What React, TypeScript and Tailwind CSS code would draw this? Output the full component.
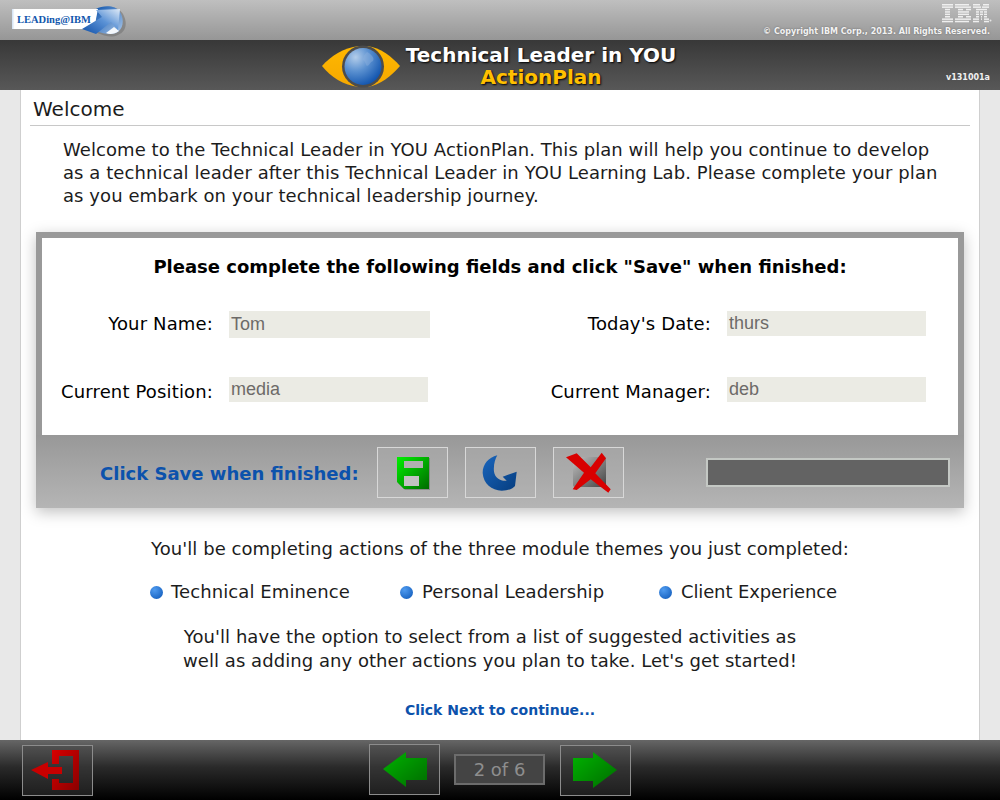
import React from "react";

const font = "[font-family:'DejaVu_Sans',Verdana,sans-serif]";

function LeadingLogo() {
  return (
    <div className="relative ml-[12px] mt-[5px] h-[32px] w-[114px]">
      <svg width="114" height="32" viewBox="0 0 114 32" className="absolute inset-0">
        <defs>
          <linearGradient id="lg1" x1="0" y1="1" x2="1" y2="0">
            <stop offset="0" stopColor="#0f4fa8" />
            <stop offset="0.55" stopColor="#5c93d6" />
            <stop offset="1" stopColor="#dfeaf7" />
          </linearGradient>
          <linearGradient id="lg2" x1="0" y1="0" x2="1" y2="1">
            <stop offset="0" stopColor="#1257ae" />
            <stop offset="1" stopColor="#a9c6e8" />
          </linearGradient>
          <linearGradient id="lg3" x1="0" y1="0" x2="1" y2="0">
            <stop offset="0" stopColor="#cfe0f4" />
            <stop offset="0.03" stopColor="#ffffff" />
            <stop offset="1" stopColor="#ffffff" />
          </linearGradient>
        </defs>
        <path d="M84 4 C92 -1 106 0 110 8 C115 17 113 26 105 29 C98 32 92 30 84 27 Z" fill="#6f6f6f" opacity="0.55" transform="translate(1 1)" />
        <path d="M84 4 C91 0 104 0 108 7 C113 15 111 25 104 28 C98 30 92 29 84 26 Z" fill="url(#lg2)" />
        <path d="M94 28 L102 22 L107 26 C103 29 98 30 94 28 Z" fill="#f4f8fc" />
        <path d="M0 4 H86 L82 24 H0 Z" fill="url(#lg3)" />
        <path d="M84 5 L108 4 L106 25 L99 17 L84 29 L70 24 L90 12 Z" fill="url(#lg1)" />
      </svg>
      <span className="absolute left-[5px] top-[8px] text-[10.500px] font-bold leading-[14px] text-[#1257ad] [font-family:'Liberation_Serif',serif]">
        LEADing@IBM
      </span>
    </div>
  );
}

const ibmRows: number[][][] = [
  [[0, 11], [13, 27], [31, 38], [41, 47]],
  [[0, 11], [13, 29], [31, 39], [40, 47]],
  [[3, 8], [16, 21], [24, 29], [34, 45]],
  [[3, 8], [16, 27], [34, 37], [38, 41], [42, 45]],
  [[3, 8], [16, 27], [34, 37], [38, 41], [42, 45]],
  [[3, 8], [16, 21], [24, 29], [34, 37], [39, 40], [42, 45]],
  [[0, 11], [13, 29], [31, 37], [39, 40], [42, 47]],
  [[0, 11], [13, 27], [31, 37], [42, 47]],
];

function IbmLogo() {
  return (
    <svg width="50" height="19" viewBox="0 0 50 19">
      {ibmRows.map((row, r) =>
        row.map(([a, b]) => <rect key={`${r}-${a}`} x={a} y={r * 2.4} width={b - a} height={1.5} fill="#efefef" />),
      )}
      <circle cx="48.500" cy="16.500" r="1" fill="#e6e6e6" />
    </svg>
  );
}

function Eye() {
  return (
    <svg width="80" height="44" viewBox="0 0 80 44">
      <defs>
        <radialGradient id="globe" cx="0.3" cy="0.25" r="0.85">
          <stop offset="0" stopColor="#b3cdea" />
          <stop offset="0.45" stopColor="#5a90d0" />
          <stop offset="1" stopColor="#0a4eaa" />
        </radialGradient>
        <linearGradient id="iris" x1="0" y1="0" x2="0" y2="1">
          <stop offset="0" stopColor="#ffb800" />
          <stop offset="1" stopColor="#f5a800" />
        </linearGradient>
      </defs>
      <path d="M1 21 C10 11 22 3 38 1 L46 1 C60 3 70 11 79 21 C70 31 60 40 46 42 L38 42 C22 40 10 32 1 21 Z" fill="url(#iris)" />
      <circle cx="42" cy="21.500" r="21" fill="#4c4c4c" />
      <circle cx="42" cy="21.500" r="18.500" fill="url(#globe)" />
      <path d="M46 7 C50 9 54 13 52 16 C49 17 49 20 46 21 C44 19 45 17 42 15 C42 11 44 9 46 7 Z" fill="#8fb2dd" opacity="0.45" />
    </svg>
  );
}

function FloppyIcon() {
  return (
    <svg width="69" height="49" viewBox="0 0 69 49">
      <defs>
        <linearGradient id="fl" x1="0" y1="0" x2="1" y2="1">
          <stop offset="0" stopColor="#00f000" />
          <stop offset="1" stopColor="#006a00" />
        </linearGradient>
      </defs>
      <path d="M20 10 H52 V42 H27 L20 35 Z" fill="#555" opacity="0.4" />
      <path d="M19 9 H51 V41 H26 L19 34 Z" fill="url(#fl)" />
      <rect x="26" y="13" width="19" height="7" fill="#b0b0b0" />
      <rect x="26" y="28" width="15" height="10" fill="#c2c2c2" />
    </svg>
  );
}

function RefreshIcon() {
  return (
    <svg width="69" height="49" viewBox="0 0 69 49">
      <defs>
        <linearGradient id="rf" x1="0" y1="0" x2="1" y2="1">
          <stop offset="0" stopColor="#1a66bd" />
          <stop offset="1" stopColor="#063d7f" />
        </linearGradient>
      </defs>
      <path
        d="M31.300 7.300 C22.300 9.300 16.300 17 16.700 25.300 C17.300 35.300 25.700 42.700 35.700 42.700 C42.300 42.700 47.300 40.300 49 38 L50.700 23.700 L36.700 28.700 L40.700 32.700 C35.700 33.700 29 30.300 28 23.700 C27.300 17 29 11.300 31.300 7.300 Z"
        fill="url(#rf)"
      />
    </svg>
  );
}

function CancelIcon() {
  return (
    <svg width="69" height="49" viewBox="0 0 69 49">
      <defs>
        <linearGradient id="cx" x1="0" y1="0" x2="1" y2="1">
          <stop offset="0" stopColor="#c0c0c0" />
          <stop offset="1" stopColor="#444444" />
        </linearGradient>
      </defs>
      <rect x="19" y="9" width="33" height="30" rx="2" fill="url(#cx)" />
      <path d="M12 9.300 L22.700 5.300 L36.700 19.300 L47.700 4.700 L52 10.300 L41.300 25.300 L56.700 41.300 L54.300 44.700 L36.700 31.300 L22.700 42 L18.700 41.300 L30 24.700 Z" fill="#d90000" />
    </svg>
  );
}

function ExitIcon() {
  return (
    <svg width="69" height="49" viewBox="0 0 69 49">
      <defs>
        <linearGradient id="ex" x1="0" y1="0" x2="1" y2="1" gradientUnits="objectBoundingBox">
          <stop offset="0" stopColor="#d80000" />
          <stop offset="1" stopColor="#8a0000" />
        </linearGradient>
      </defs>
      <path d="M29 4 H56 V44 H29 V33 H36 V37 H50 V10 H36 V18 H29 Z" fill="url(#ex)" />
      <path d="M8 24 L25 16 V21 H39 V28 H25 V33 Z" fill="#c80000" />
    </svg>
  );
}

function Arrow({ dir }: { dir: "left" | "right" }) {
  const id = dir === "left" ? "arl" : "arr";
  return (
    <svg width="69" height="49" viewBox="0 0 69 49">
      <defs>
        <linearGradient id={id} x1="0" y1="0" x2="1" y2="1">
          <stop offset="0" stopColor="#00b400" />
          <stop offset="1" stopColor="#006c00" />
        </linearGradient>
      </defs>
      <path
        d={dir === "left" ? "M13 24 L36 7 V13 H57 V35 H36 V42 Z" : "M56 24 L32 6 V12 H12 V35 H32 V42 Z"}
        fill={`url(#${id})`}
      />
    </svg>
  );
}

function IconBox({ children, light, className }: { children: React.ReactNode; light?: boolean; className?: string }) {
  return (
    <div className={`h-[51px] w-[71px] shrink-0 border ${light ? "border-[#d8d8d8] bg-[#b2b2b2]/40" : "border-[#8c8c8c] bg-[#444]/40"} ${className ?? ""}`}>
      {children}
    </div>
  );
}

function Field({ label, value, w, h, low }: { label: string; value: string; w: string; h: string; low?: boolean }) {
  return (
    <div className="flex items-start">
      <div className={`w-[171px] whitespace-nowrap text-right text-[18px] leading-[25px] tracking-[0.15px] text-black ${low ? "mt-[2px]" : ""}`}>{label}</div>
      <div className={`ml-[16px] flex items-center bg-[#ebebe4] pl-[2px] text-[18px] text-[#6d6a68] [font-family:'Liberation_Sans',sans-serif] ${w} ${h}`}>
        {value}
      </div>
    </div>
  );
}

function Bullet({ text, className }: { text: string; className?: string }) {
  return (
    <div className={`flex items-center ${className ?? ""}`}>
      <span className="h-[13px] w-[13px] rounded-full bg-[radial-gradient(circle_at_35%_30%,#4f9bf0,#0b55b5)]" />
      <span>{text}</span>
    </div>
  );
}

export default function App() {
  return (
    <div className={`flex h-[800px] w-[1000px] flex-col overflow-hidden bg-[#e8e8e8] ${font}`}>
      <header className="relative flex h-[40px] shrink-0 justify-between bg-[linear-gradient(#bfbfbf,#969696)]">
        <LeadingLogo />
        <div className="mr-[10px] flex flex-col items-end">
          <div className="-mr-[2px] mt-[4px] h-[22px] w-[50px]">
            <IbmLogo />
          </div>
          <div className="text-[8px] font-bold leading-[12px] text-[#f2f2f2] [text-shadow:0_0_2px_#666]">
            © Copyright IBM Corp., 2013. All Rights Reserved.
          </div>
        </div>
      </header>

      <div className="relative flex h-[50px] shrink-0 items-center justify-center bg-[linear-gradient(#383838,#585858)]">
        <div className="mr-[3px] flex items-center">
          <div className="mt-[3px]">
            <Eye />
          </div>
          <div className="mb-[2px] ml-[5px] flex flex-col items-center">
            <div className="text-[20px] font-bold leading-[26px] text-white [text-shadow:1px_1px_2px_#000]">Technical Leader in YOU</div>
            <div className="-mt-[1px] text-[20px] font-bold leading-[20px] text-[#ffc000] [text-shadow:1px_1px_2px_#000]">ActionPlan</div>
          </div>
        </div>
        <div className="absolute bottom-[6px] right-[10px] text-[8px] font-bold leading-[12px] text-[#f0f0f0]">v131001a</div>
      </div>

      <main className="mx-[20px] flex h-[650px] shrink-0 flex-col border-x border-[#cfcfcf] bg-white text-black">
        <div className="mx-[9px] border-b border-[#c8c8c8] pl-[3px] pt-[4px] text-[20px] leading-[31px] text-[#1c1c1c]">Welcome</div>
        <p className="ml-[42px] mt-[12px] w-[890px] whitespace-nowrap text-[18px] leading-[23px] tracking-[0.07px] text-[#1c1c1c]">
          Welcome to the Technical Leader in YOU ActionPlan. This plan will help you continue to develop
          <br />
          as a technical leader after this Technical Leader in YOU Learning Lab. Please complete your plan
          <br />
          as you embark on your technical leadership journey.
        </p>

        <section className="ml-[15px] mt-[25px] h-[276px] w-[928px] bg-[#999] shadow-[0_4px_14px_rgba(0,0,0,0.25)]">
          <div className="mx-[6px] h-[203px] border-t-[6px] border-[#999] bg-white">
            <div className="pt-[18px] text-center text-[18px] font-bold leading-[22px] text-black">
              Please complete the following fields and click "Save" when finished:
            </div>
            <div className="mt-[33px] grid grid-cols-[498px_1fr] items-start gap-y-[39px]">
              <Field label="Your Name:" value="Tom" w="w-[201px]" h="h-[27px]" />
              <Field label="Today's Date:" value="thurs" w="w-[199px]" h="h-[25px]" />
              <Field label="Current Position:" value="media" w="w-[199px]" h="h-[25px]" low />
              <Field label="Current Manager:" value="deb" w="w-[199px]" h="h-[25px]" low />
            </div>
          </div>
          <div className="flex h-[73px] items-center bg-[linear-gradient(#989898,#b5b5b5)] pl-[64px] pt-[2px]">
            <div className="mt-[2px] w-[258px] whitespace-nowrap text-[18px] font-bold leading-[24px] text-[#0c52ac]">Click Save when finished:</div>
            <IconBox light className="ml-[19px]">
              <FloppyIcon />
            </IconBox>
            <IconBox light className="ml-[17px]">
              <RefreshIcon />
            </IconBox>
            <IconBox light className="ml-[17px]">
              <CancelIcon />
            </IconBox>
            <div className="ml-[82px] h-[29px] w-[244px] border-2 border-[#c4c8c4] bg-[#636363]" />
          </div>
        </section>

        <div className="mt-[29px] text-center text-[18px] leading-[24px] tracking-[0.05px] text-[#1c1c1c]">
          You'll be completing actions of the three module themes you just completed:
        </div>
        <div className="ml-[129px] mt-[19px] flex text-[18px] leading-[24px] tracking-[0.1px] text-[#1c1c1c]">
          <Bullet text="Technical Eminence" className="w-[250px] gap-[8px]" />
          <Bullet text="Personal Leadership" className="w-[259px] gap-[9px] tracking-[0.05px]" />
          <Bullet text="Client Experience" className="gap-[9px] tracking-[-0.13px]" />
        </div>
        <div className="mt-[21px] pr-[20px] text-center text-[18px] leading-[24px] tracking-[0.05px] text-[#1c1c1c]">
          You'll have the option to select from a list of suggested activities as
          <br />
          well as adding any other actions you plan to take. Let's get started!
        </div>
        <div className="mt-[28px] text-center text-[14px] font-bold leading-[18px] text-[#0c52ac]">Click Next to continue...</div>
      </main>

      <footer className="relative flex h-[60px] shrink-0 items-start bg-[linear-gradient(#666,#2a2a2a_45%,#000)]">
        <IconBox className="ml-[22px] mt-[5px]">
          <ExitIcon />
        </IconBox>
        <IconBox className="ml-[276px] mt-[4px]">
          <Arrow dir="left" />
        </IconBox>
        <div className="ml-[14px] mt-[14px] flex h-[31px] w-[91px] items-center justify-center border-2 border-[#6c6c6c] bg-[#444] text-[18px] text-[#8e8e8e]">2 of 6</div>
        <IconBox className="ml-[15px] mt-[5px]">
          <Arrow dir="right" />
        </IconBox>
      </footer>
    </div>
  );
}
